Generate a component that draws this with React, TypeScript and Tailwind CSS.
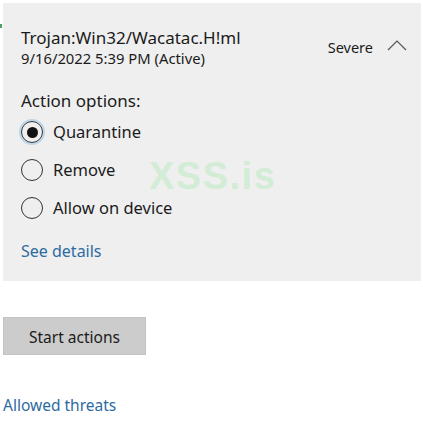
import React, { useState } from 'react';

const OPTIONS = ['Quarantine', 'Remove', 'Allow on device'];

function Radio({ checked }: { checked: boolean }) {
  return (
    <span className="w-[22px] h-[22px] rounded-full border-[1.5px] border-[#333] flex items-center justify-center shrink-0 data-[on=true]:ring-2 data-[on=true]:ring-[#bcd6ea]" data-on={checked}>
      {checked && <span className="w-[11px] h-[11px] rounded-full bg-[#111]" />}
    </span>
  );
}

export default function App() {
  const [choice, setChoice] = useState('Quarantine');

  return (
    <div className="w-[423px] h-[428px] bg-white text-[#1b1b1b] relative overflow-hidden" style={{ fontFamily: '"Noto Sans", "Open Sans", sans-serif' }}>
      <span className="absolute left-0 top-[24px] w-[2px] h-[4px] bg-[#4aa06a]" />

      <div className="pt-[3px] pl-[3px] pr-[2px]">
        <div className="bg-[#efefef] h-[278px] pl-[18px] pr-[14px] relative">
          {/* header */}
          <div className="flex items-start pt-[24px]">
            <div className="flex-1">
              <div className="text-[17px] leading-[22px]">Trojan:Win32/Wacatac.H!ml</div>
              <div className="text-[14.8px] leading-[20px] mt-[-1px]">9/16/2022 5:39 PM (Active)</div>
            </div>
            <div className="flex items-center gap-[14px] pt-[10px]">
              <span className="text-[14.5px] leading-[20px]">Severe</span>
              <svg width="20" height="11" viewBox="0 0 20 11" fill="none" stroke="#555" strokeWidth="1.2" className="-mt-[3px]">
                <path d="M1 10 L10 1 L19 10" />
              </svg>
            </div>
          </div>

          <div className="text-[17px] leading-[22px] mt-[22px]">Action options:</div>

          <div className="flex flex-col gap-[16px] mt-[9px]">
            {OPTIONS.map(opt => (
              <button
                key={opt}
                type="button"
                onClick={() => setChoice(opt)}
                className="flex items-center gap-[10px] h-[22px] text-left"
              >
                <Radio checked={choice === opt} />
                <span className="text-[16.5px] leading-[22px]">{opt}</span>
              </button>
            ))}
          </div>

          <div className="text-[16px] leading-[20px] text-[#2d6ba0] mt-[22px]">See details</div>

          <span className="absolute left-[146px] top-[151px] text-[38px] leading-[44px] font-bold text-[#d2ecd6] tracking-[1.5px]" style={{ fontFamily: '"Liberation Sans", sans-serif' }}>
            XSS.is
          </span>
        </div>

        <button type="button" className="mt-[36px] w-[143px] h-[38px] bg-[#cccccc] border border-[#c4c4c4] text-[15.5px] leading-[20px] pt-[1px]">
          Start actions
        </button>

        <div className="mt-[40px] text-[15.5px] leading-[20px] text-[#2d6ba0]">Allowed threats</div>
      </div>
    </div>
  );
}
